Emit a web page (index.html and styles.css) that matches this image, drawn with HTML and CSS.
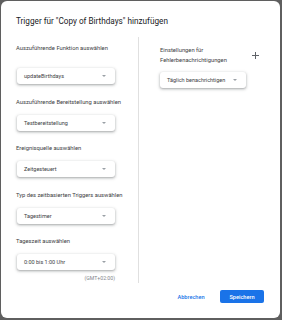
FILE: index.html
```html
<!DOCTYPE html>
<html lang="de">
<head>
<meta charset="utf-8">
<link rel="stylesheet" href="styles.css">
</head>
<body>
<div class="dialog">
  <div class="title">Trigger für "Copy of Birthdays" hinzufügen</div>
  <div class="content">
    <div class="left">
      <div class="label l1">Auszuführende Funktion auswählen</div>
      <div class="select"><span>updateBirthdays</span><i class="arrow"></i></div>
      <div class="label">Auszuführende Bereitstellung auswählen</div>
      <div class="select"><span>Testbereitstellung</span><i class="arrow"></i></div>
      <div class="label">Ereignisquelle auswählen</div>
      <div class="select"><span>Zeitgesteuert</span><i class="arrow"></i></div>
      <div class="label">Typ des zeitbasierten Triggers auswählen</div>
      <div class="select"><span>Tagestimer</span><i class="arrow"></i></div>
      <div class="label">Tageszeit auswählen</div>
      <div class="select"><span>0:00 bis 1:00 Uhr</span><i class="arrow"></i></div>
      <div class="tz">(GMT+02:00)</div>
    </div>
    <div class="right">
      <div class="rhead">
        <div class="rlabel">Einstellungen für<br>Fehlerbenachrichtigungen</div>
        <svg class="plus" width="7" height="7" viewBox="0 0 7 7"><path d="M3.5 0V7M0 3.5H7" stroke="#5f6368" stroke-width="1" fill="none"/></svg>
      </div>
      <div class="select narrow"><span>Täglich benachrichtigen</span><i class="arrow"></i></div>
    </div>
  </div>
  <div class="actions">
    <button class="btn text">Abbrechen</button>
    <button class="btn primary">Speichern</button>
  </div>
</div>
</body>
</html>
```
FILE: styles.css
```css
html, body { margin: 0; padding: 0; }
body {
  background: #5f5f5f;
  font-family: Roboto, "Noto Sans", sans-serif;
  width: 282px;
  height: 320px;
  overflow: hidden;
}
.dialog {
  margin: 1px 2px 2px 1px;
  height: 317px;
  box-sizing: border-box;
  background: #fff;
  border-radius: 6px;
  padding: 14px 15px 0 15px;
  display: flex;
  flex-direction: column;
}
.title {
  font-size: 8.2px;
  line-height: 12px;
  color: #202124;
  margin-bottom: 10px;
}
.content {
  display: flex;
  height: 246px;
}
.left {
  width: 123px;
  border-right: 1px solid #e0e0e0;
  padding-top: 7px;
  box-sizing: border-box;
  display: flex;
  flex-direction: column;
}
.label {
  font-size: 5.8px;
  line-height: 8px;
  color: #3c4043;
  margin-top: 13.5px;
  margin-bottom: 9px;
}
.label.l1 { margin-top: 0; margin-bottom: 16px; }
.select {
  width: 98px;
  height: 16px;
  flex: none;
  margin-left: 1px;
  box-sizing: border-box;
  border-radius: 3px;
  background: #fff;
  box-shadow: 0 1px 2px rgba(60,64,67,.3), 0 1px 3px 1px rgba(60,64,67,.15);
  display: flex;
  align-items: center;
  justify-content: space-between;
  padding: 0 9px 0 7px;
  font-size: 5.5px;
  color: #3c4043;
}
.arrow {
  width: 0;
  height: 0;
  border-left: 2px solid transparent;
  border-right: 2px solid transparent;
  border-top: 2px solid #9aa0a6;
}
.tz {
  width: 99px;
  text-align: right;
  font-size: 5.2px;
  line-height: 8px;
  color: #80868b;
  margin-top: 4px;
}
.right {
  flex: 1;
  padding: 8px 0 0 21px;
}
.rhead {
  display: flex;
  justify-content: space-between;
  align-items: center;
}
.rlabel {
  font-size: 5.8px;
  line-height: 10px;
  color: #3c4043;
}
.plus {
  display: block;
  margin-right: 6px;
}
.select.narrow {
  width: 86px;
  margin-left: 0;
  margin-top: 7px;
}
.actions {
  display: flex;
  justify-content: flex-end;
  align-items: center;
  gap: 14px;
  margin-top: 7px;
  padding-right: 1px;
}
.btn {
  font-family: Roboto, sans-serif;
  font-size: 5.6px;
  font-weight: 500;
  border: none;
  border-radius: 2px;
  height: 13px;
  padding: 0;
  cursor: pointer;
}
.btn.text {
  background: transparent;
  color: #1a73e8;
  width: 30px;
}
.btn.primary {
  background: #1a73e8;
  color: #fff;
  width: 44px;
}
```
